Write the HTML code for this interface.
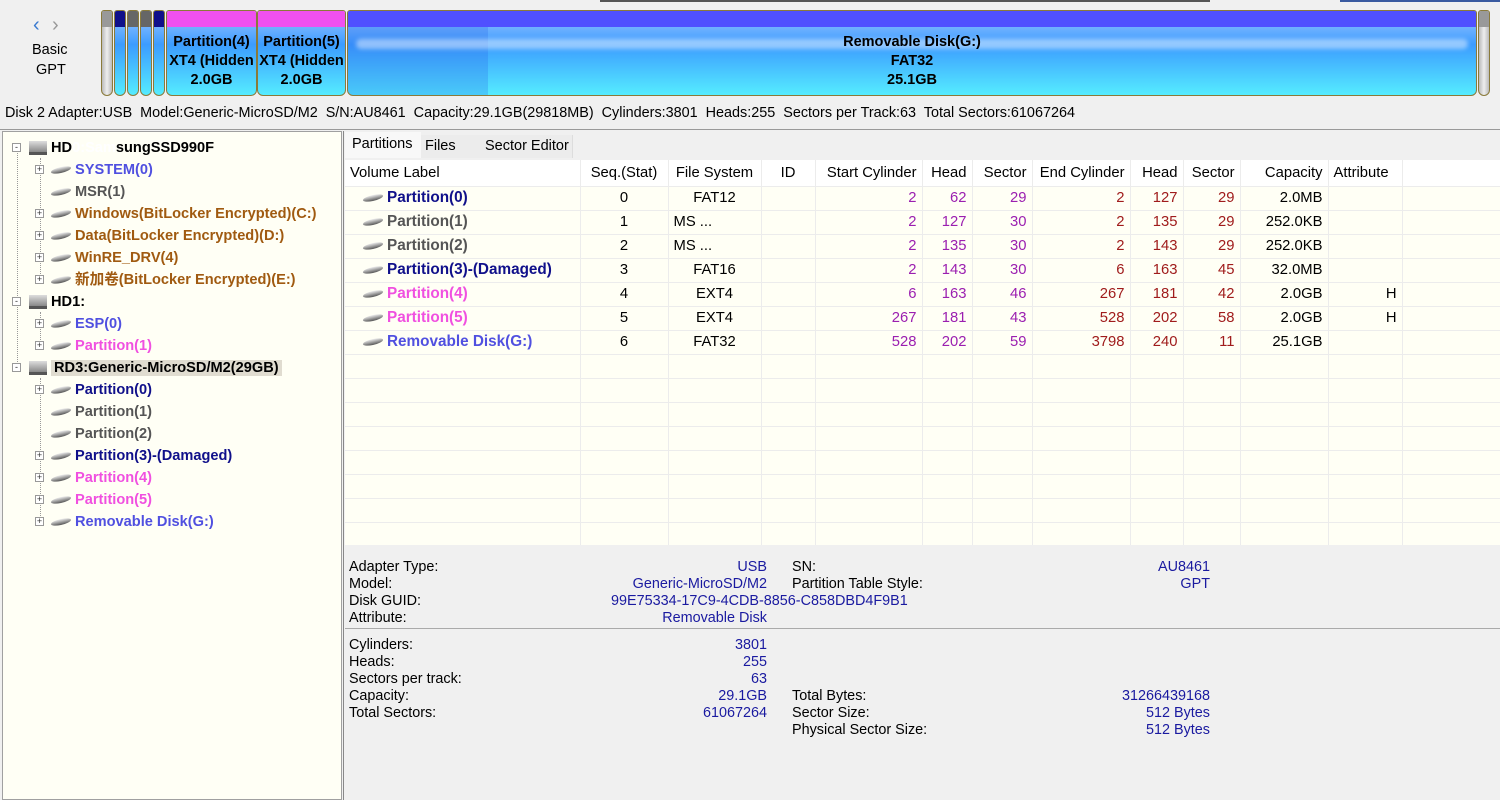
<!DOCTYPE html>
<html><head><meta charset="utf-8"><style>
*{margin:0;padding:0;box-sizing:border-box}
body{width:1500px;height:800px;background:#f0f0f0;font-family:"Liberation Sans","Noto Sans CJK SC",sans-serif;font-size:14px;color:#000;position:relative;overflow:hidden}
.a{position:absolute;white-space:nowrap}
.seg{position:absolute;top:10px;height:86px;border:1px solid #8a7a3a;border-radius:3px 3px 6px 6px;overflow:hidden;background:linear-gradient(#9fc6ff,#3c9cff 40%,#55ecff)}
.seg .h{position:absolute;left:0;right:0;top:0;height:16px}
.pt{font-weight:bold;text-align:center;line-height:19px;font-size:14.5px;position:absolute;left:0;right:0;top:22px}
.tree{position:absolute;left:2px;top:131px;width:340px;height:669px;background:#fffff5;border:1px solid #a0a0a0}
.tr{position:absolute;height:20px;line-height:20px;font-weight:bold;font-size:14.6px}
.box{position:absolute;width:9px;height:9px;border:1px solid #999;background:#fff;font-size:9px;line-height:7px;text-align:center;color:#333}
.drv{display:inline-block;width:20px;height:6px;background:linear-gradient(#eee,#555);border-radius:50%;transform:skewY(-12deg);vertical-align:middle;margin-right:4px}
.hd{display:inline-block;width:18px;height:14px;background:linear-gradient(#ddd,#888);vertical-align:middle;margin-right:4px;border-bottom:3px solid #555}
table{border-collapse:collapse;position:absolute;left:345px;top:160px;background:#fffff5;table-layout:fixed}
td{height:24px;border-right:1px solid #ececec;border-bottom:1px solid #ececec;padding:0 5px;font-size:14.8px;white-space:nowrap;overflow:hidden}
tr.hdr td{background:#fff;height:26px}
.c{text-align:center}.r{text-align:right}
.p{color:#9b1fb0}.d{color:#a01c1c}
.lb{font-weight:bold;font-size:15.3px}
.info{color:#1a1aa0}
.ip{font-size:14.4px}
</style></head><body>
<div class="a" style="left:600px;top:0;width:610px;height:2px;background:#555"></div>
<div class="a" style="left:1340px;top:0;width:160px;height:2px;background:#3a5aa0"></div>
<div class="a" style="left:33px;top:14px;font-size:20px;color:#3a7ad0">&#8249;</div>
<div class="a" style="left:52px;top:14px;font-size:20px;color:#999">&#8250;</div>
<div class="a" style="left:32px;top:42px;font-size:14.5px">Basic</div>
<div class="a" style="left:36px;top:62px;font-size:14.5px">GPT</div>
<div class="seg" style="left:101px;width:12px;background:linear-gradient(90deg,#bbb,#eee,#bbb)"><div class="h" style="background:#999"></div></div>
<div class="seg" style="left:114px;width:12px"><div class="h" style="background:#10108a"></div></div>
<div class="seg" style="left:127px;width:12px"><div class="h" style="background:#666"></div></div>
<div class="seg" style="left:140px;width:12px"><div class="h" style="background:#666"></div></div>
<div class="seg" style="left:153px;width:12px"><div class="h" style="background:#10108a"></div></div>
<div class="seg" style="left:166px;width:91px"><div class="h" style="background:#f050f0"></div><div class="pt">Partition(4)<br>XT4 (Hidden<br>2.0GB</div></div>
<div class="seg" style="left:257px;width:89px"><div class="h" style="background:#f050f0"></div><div class="pt">Partition(5)<br>XT4 (Hidden<br>2.0GB</div></div>
<div class="seg" style="left:347px;width:1130px"><div class="h" style="background:#5050ff"></div><div class="a" style="left:0;width:140px;top:16px;bottom:0;background:rgba(40,100,230,.25)"></div><div class="a" style="left:8px;right:8px;top:28px;height:10px;background:rgba(255,255,255,.45);border-radius:5px;filter:blur(2px)"></div><div class="pt">Removable Disk(G:)<br>FAT32<br>25.1GB</div></div>
<div class="seg" style="left:1478px;width:12px;background:linear-gradient(90deg,#bbb,#eee,#bbb)"><div class="h" style="background:#999"></div></div>
<div class="a" style="left:5px;top:105px;font-size:14.4px">Disk 2 Adapter:USB&nbsp; Model:Generic-MicroSD/M2&nbsp; S/N:AU8461&nbsp; Capacity:29.1GB(29818MB)&nbsp; Cylinders:3801&nbsp; Heads:255&nbsp; Sectors per Track:63&nbsp; Total Sectors:61067264</div>
<div class="a" style="left:0;top:129px;width:1500px;height:1px;background:#999"></div>

<div class="tree">
<div class="a" style="left:14px;top:16px;width:1px;height:220px;border-left:1px dotted #999"></div>
<div class="a" style="left:37px;top:26px;width:1px;height:124px;border-left:1px dotted #999"></div>
<div class="a" style="left:37px;top:180px;width:1px;height:36px;border-left:1px dotted #999"></div>
<div class="a" style="left:37px;top:246px;width:1px;height:146px;border-left:1px dotted #999"></div>
<div class="box" style="left:9px;top:11px">-</div><div class="tr" style="left:26px;top:6px"><span class="hd"></span>HD<span style="color:#fff">0:Sam</span>sungSSD990F</div>
<div class="box" style="left:32px;top:33px">+</div><div class="tr" style="left:48px;top:28px;color:#5050e0"><span class="drv"></span>SYSTEM(0)</div>
<div class="tr" style="left:48px;top:50px;color:#555"><span class="drv"></span>MSR(1)</div>
<div class="box" style="left:32px;top:77px">+</div><div class="tr" style="left:48px;top:72px;color:#a05a10"><span class="drv"></span>Windows(BitLocker Encrypted)(C:)</div>
<div class="box" style="left:32px;top:99px">+</div><div class="tr" style="left:48px;top:94px;color:#a05a10"><span class="drv"></span>Data(BitLocker Encrypted)(D:)</div>
<div class="box" style="left:32px;top:121px">+</div><div class="tr" style="left:48px;top:116px;color:#a05a10"><span class="drv"></span>WinRE_DRV(4)</div>
<div class="box" style="left:32px;top:143px">+</div><div class="tr" style="left:48px;top:138px;color:#a05a10"><span class="drv"></span>新加卷(BitLocker Encrypted)(E:)</div>
<div class="box" style="left:9px;top:165px">-</div><div class="tr" style="left:26px;top:160px"><span class="hd"></span>HD1:</div>
<div class="box" style="left:32px;top:187px">+</div><div class="tr" style="left:48px;top:182px;color:#5050e0"><span class="drv"></span>ESP(0)</div>
<div class="box" style="left:32px;top:209px">+</div><div class="tr" style="left:48px;top:204px;color:#f050e0"><span class="drv"></span>Partition(1)</div>
<div class="box" style="left:9px;top:231px">-</div><div class="tr" style="left:26px;top:226px"><span class="hd"></span><span style="background:#e0dcd0;padding:0 3px">RD3:Generic-MicroSD/M2(29GB)</span></div>
<div class="box" style="left:32px;top:253px">+</div><div class="tr" style="left:48px;top:248px;color:#10108a"><span class="drv"></span>Partition(0)</div>
<div class="tr" style="left:48px;top:270px;color:#555"><span class="drv"></span>Partition(1)</div>
<div class="tr" style="left:48px;top:292px;color:#555"><span class="drv"></span>Partition(2)</div>
<div class="box" style="left:32px;top:319px">+</div><div class="tr" style="left:48px;top:314px;color:#10108a"><span class="drv"></span>Partition(3)-(Damaged)</div>
<div class="box" style="left:32px;top:341px">+</div><div class="tr" style="left:48px;top:336px;color:#f050e0"><span class="drv"></span>Partition(4)</div>
<div class="box" style="left:32px;top:363px">+</div><div class="tr" style="left:48px;top:358px;color:#f050e0"><span class="drv"></span>Partition(5)</div>
<div class="box" style="left:32px;top:385px">+</div><div class="tr" style="left:48px;top:380px;color:#5050e0"><span class="drv"></span>Removable Disk(G:)</div>
</div>

<div class="a" style="left:343px;top:131px;width:1px;height:669px;background:#888"></div>
<div class="a" style="left:345px;top:132px;width:76px;height:26px;background:#f8f8f8;padding:4px 0 0 7px;font-size:14.5px">Partitions</div>
<div class="a" style="left:421px;top:135px;width:58px;height:23px;background:#ececec;padding:3px 0 0 4px;font-size:14.5px">Files</div>
<div class="a" style="left:479px;top:135px;width:94px;height:23px;background:#ececec;padding:3px 0 0 6px;border-right:1px solid #ddd;font-size:14.5px">Sector Editor</div>

<table style="width:1155px">
<colgroup><col style="width:235px"><col style="width:88px"><col style="width:93px"><col style="width:54px"><col style="width:107px"><col style="width:50px"><col style="width:60px"><col style="width:98px"><col style="width:53px"><col style="width:57px"><col style="width:88px"><col style="width:74px"><col style="width:98px"></colgroup>
<tr class="hdr"><td>Volume Label</td><td class="c">Seq.(Stat)</td><td class="c">File System</td><td class="c">ID</td><td class="r">Start Cylinder</td><td class="r">Head</td><td class="r">Sector</td><td class="r">End Cylinder</td><td class="r">Head</td><td class="r">Sector</td><td class="r">Capacity</td><td>Attribute</td><td style="border-right:0"></td></tr>
<tr><td class="lb" style="color:#10108a;padding-left:18px"><span class="drv"></span>Partition(0)</td><td class="c">0</td><td class="c">FAT12</td><td></td><td class="r p">2</td><td class="r p">62</td><td class="r p">29</td><td class="r d">2</td><td class="r d">127</td><td class="r d">29</td><td class="r">2.0MB</td><td></td><td></td></tr>
<tr><td class="lb" style="color:#555;padding-left:18px"><span class="drv"></span>Partition(1)</td><td class="c">1</td><td>MS ...</td><td></td><td class="r p">2</td><td class="r p">127</td><td class="r p">30</td><td class="r d">2</td><td class="r d">135</td><td class="r d">29</td><td class="r">252.0KB</td><td></td><td></td></tr>
<tr><td class="lb" style="color:#555;padding-left:18px"><span class="drv"></span>Partition(2)</td><td class="c">2</td><td>MS ...</td><td></td><td class="r p">2</td><td class="r p">135</td><td class="r p">30</td><td class="r d">2</td><td class="r d">143</td><td class="r d">29</td><td class="r">252.0KB</td><td></td><td></td></tr>
<tr><td class="lb" style="color:#10108a;padding-left:18px"><span class="drv"></span>Partition(3)-(Damaged)</td><td class="c">3</td><td class="c">FAT16</td><td></td><td class="r p">2</td><td class="r p">143</td><td class="r p">30</td><td class="r d">6</td><td class="r d">163</td><td class="r d">45</td><td class="r">32.0MB</td><td></td><td></td></tr>
<tr><td class="lb" style="color:#f050e0;padding-left:18px"><span class="drv"></span>Partition(4)</td><td class="c">4</td><td class="c">EXT4</td><td></td><td class="r p">6</td><td class="r p">163</td><td class="r p">46</td><td class="r d">267</td><td class="r d">181</td><td class="r d">42</td><td class="r">2.0GB</td><td class="r">H</td><td></td></tr>
<tr><td class="lb" style="color:#f050e0;padding-left:18px"><span class="drv"></span>Partition(5)</td><td class="c">5</td><td class="c">EXT4</td><td></td><td class="r p">267</td><td class="r p">181</td><td class="r p">43</td><td class="r d">528</td><td class="r d">202</td><td class="r d">58</td><td class="r">2.0GB</td><td class="r">H</td><td></td></tr>
<tr><td class="lb" style="color:#5050e0;padding-left:18px"><span class="drv"></span>Removable Disk(G:)</td><td class="c">6</td><td class="c">FAT32</td><td></td><td class="r p">528</td><td class="r p">202</td><td class="r p">59</td><td class="r d">3798</td><td class="r d">240</td><td class="r d">11</td><td class="r">25.1GB</td><td></td><td></td></tr>
<tr><td></td><td></td><td></td><td></td><td></td><td></td><td></td><td></td><td></td><td></td><td></td><td></td><td></td></tr>
<tr><td></td><td></td><td></td><td></td><td></td><td></td><td></td><td></td><td></td><td></td><td></td><td></td><td></td></tr>
<tr><td></td><td></td><td></td><td></td><td></td><td></td><td></td><td></td><td></td><td></td><td></td><td></td><td></td></tr>
<tr><td></td><td></td><td></td><td></td><td></td><td></td><td></td><td></td><td></td><td></td><td></td><td></td><td></td></tr>
<tr><td></td><td></td><td></td><td></td><td></td><td></td><td></td><td></td><td></td><td></td><td></td><td></td><td></td></tr>
<tr><td></td><td></td><td></td><td></td><td></td><td></td><td></td><td></td><td></td><td></td><td></td><td></td><td></td></tr>
<tr><td></td><td></td><td></td><td></td><td></td><td></td><td></td><td></td><td></td><td></td><td></td><td></td><td></td></tr>
<tr><td></td><td></td><td></td><td></td><td></td><td></td><td></td><td></td><td></td><td></td><td></td><td></td><td></td></tr>
</table>
<div class="a" style="left:345px;top:545px;width:1155px;height:255px;background:#f0f0f0"></div>
<div class="a ip" style="left:349px;top:559px;line-height:17px">Adapter Type:<br>Model:<br>Disk GUID:<br>Attribute:</div>
<div class="a info ip" style="left:560px;width:207px;top:559px;line-height:17px;text-align:right">USB<br>Generic-MicroSD/M2<br>&nbsp;<br>Removable Disk</div>
<div class="a info ip" style="left:611px;top:593px;line-height:17px">99E75334-17C9-4CDB-8856-C858DBD4F9B1</div>
<div class="a ip" style="left:792px;top:559px;line-height:17px">SN:<br>Partition Table Style:</div>
<div class="a info ip" style="left:1050px;width:160px;top:559px;line-height:17px;text-align:right">AU8461<br>GPT</div>
<div class="a" style="left:345px;top:628px;width:1155px;height:1px;background:#aaa"></div>
<div class="a ip" style="left:349px;top:637px;line-height:17px">Cylinders:<br>Heads:<br>Sectors per track:<br>Capacity:<br>Total Sectors:</div>
<div class="a info ip" style="left:560px;width:207px;top:637px;line-height:17px;text-align:right">3801<br>255<br>63<br>29.1GB<br>61067264</div>
<div class="a ip" style="left:792px;top:688px;line-height:17px">Total Bytes:<br>Sector Size:<br>Physical Sector Size:</div>
<div class="a info ip" style="left:1050px;width:160px;top:688px;line-height:17px;text-align:right">31266439168<br>512 Bytes<br>512 Bytes</div>
</body></html>
